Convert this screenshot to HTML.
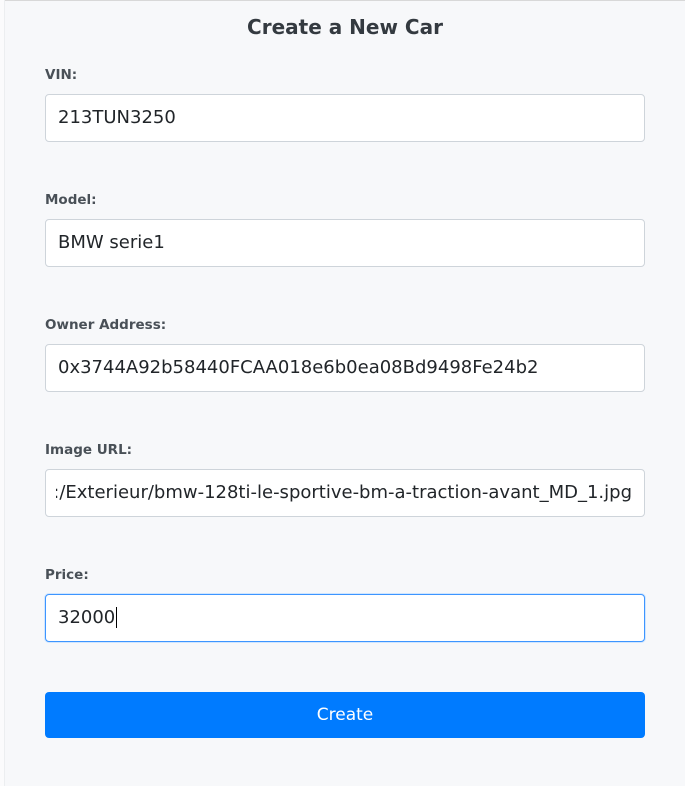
<!DOCTYPE html>
<html><head><style>
html,body{margin:0;padding:0;width:685px;height:786px;overflow:hidden;background:#f7f8fa;font-family:"DejaVu Sans","Liberation Sans",sans-serif;}
.top{position:absolute;left:0;top:0;width:685px;height:1px;background:#d8d8d8}
.lft{position:absolute;left:0;top:0;width:4px;height:786px;background:#fbfbfc;border-right:1px solid #eceef0}
h1{position:absolute;left:0;width:690px;top:15px;margin:0;text-align:center;font-size:20px;font-weight:bold;color:#343a40}
label{position:absolute;left:45px;font-size:13.5px;font-weight:bold;color:#495057}
.in{position:absolute;left:45px;width:598px;height:46px;background:#fff;border:1px solid #ced4da;border-radius:4px;box-sizing:content-box;font-size:18px;color:#212529;line-height:46px;padding:0;overflow:hidden;white-space:nowrap}
.in span{position:absolute;left:12px}
.clip{position:absolute;left:10px;right:12px;top:0;bottom:0;overflow:hidden}
.foc{border-color:#3d95ff;box-shadow:0 0 0 1px #d0e6ff}
.btn{position:absolute;left:45px;top:692px;width:600px;height:46px;background:#007bff;border-radius:4px;color:#fff;font-size:17px;text-align:center;line-height:46px}
</style></head><body>
<div class="top"></div><div class="lft"></div>
<h1>Create a New Car</h1>
<label style="top:67px">VIN:</label>
<div class="in" style="top:94px"><span>213TUN3250</span></div>
<label style="top:192px">Model:</label>
<div class="in" style="top:219px"><span>BMW serie1</span></div>
<label style="top:317px">Owner Address:</label>
<div class="in" style="top:344px"><span>0x3744A92b58440FCAA018e6b0ea08Bd9498Fe24b2</span></div>
<label style="top:442px">Image URL:</label>
<div class="in" style="top:469px"><div class="clip"><span style="left:auto;right:0">m:/Exterieur/bmw-128ti-le-sportive-bm-a-traction-avant_MD_1.jpg</span></div></div>
<label style="top:567px">Price:</label>
<div class="in foc" style="top:594px"><span>32000<span style="position:static;border-right:1px solid #000;margin-left:1px"></span></span></div>
<div class="btn">Create</div>
</body></html>
